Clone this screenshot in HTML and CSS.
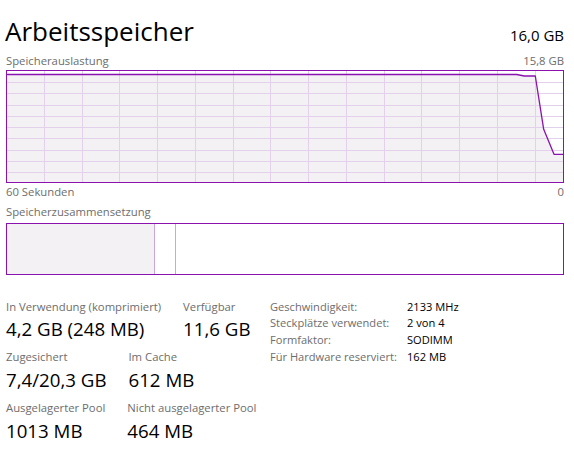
FILE: index.html
```html
<!DOCTYPE html>
<html lang="de">
<head>
<meta charset="utf-8">
<title>Arbeitsspeicher</title>
<link rel="stylesheet" href="styles.css">
</head>
<body>
<main class="tm">
  <header class="head">
    <h1 class="title">Arbeitsspeicher</h1>
    <span class="total">16,0 GB</span>
  </header>

  <div class="axis axis-top"><span>Speicherauslastung</span><span>15,8 GB</span></div>
  <div class="graph">
    <svg class="graph-svg" viewBox="0 0 556 111" width="556" height="111" aria-hidden="true">
      <rect x="0" y="0" width="556" height="111" fill="#ffffff"/>
      <polygon points="0,111 0,3.5 509.7,3.5 517.3,5 528.3,5 536.7,58.3 547,83.3 556,83.3 556,111" fill="#f3f1f4"/>
      <g stroke="#e3d0ea" stroke-width="1">
        <line x1="0" y1="11.5" x2="556" y2="11.5"/>
        <line x1="0" y1="22.5" x2="556" y2="22.5"/>
        <line x1="0" y1="34.5" x2="556" y2="34.5"/>
        <line x1="0" y1="45.5" x2="556" y2="45.5"/>
        <line x1="0" y1="56.5" x2="556" y2="56.5"/>
        <line x1="0" y1="67.5" x2="556" y2="67.5"/>
        <line x1="0" y1="79.5" x2="556" y2="79.5"/>
        <line x1="0" y1="90.5" x2="556" y2="90.5"/>
        <line x1="0" y1="101.5" x2="556" y2="101.5"/>
        <line x1="37.5" y1="0" x2="37.5" y2="111"/>
        <line x1="75.5" y1="0" x2="75.5" y2="111"/>
        <line x1="112.5" y1="0" x2="112.5" y2="111"/>
        <line x1="150.5" y1="0" x2="150.5" y2="111"/>
        <line x1="188.5" y1="0" x2="188.5" y2="111"/>
        <line x1="226.5" y1="0" x2="226.5" y2="111"/>
        <line x1="263.5" y1="0" x2="263.5" y2="111"/>
        <line x1="301.5" y1="0" x2="301.5" y2="111"/>
        <line x1="339.5" y1="0" x2="339.5" y2="111"/>
        <line x1="377.5" y1="0" x2="377.5" y2="111"/>
        <line x1="414.5" y1="0" x2="414.5" y2="111"/>
        <line x1="452.5" y1="0" x2="452.5" y2="111"/>
        <line x1="490.5" y1="0" x2="490.5" y2="111"/>
        <line x1="528.5" y1="0" x2="528.5" y2="111"/>
      </g>
      <polyline points="0,3.5 509.7,3.5 517.3,5 528.3,5 536.7,58.3 547,83.3 556,83.3" fill="none" stroke="#8b12ae" stroke-width="1.3" stroke-linejoin="round"/>
    </svg>
  </div>
  <div class="axis axis-bottom"><span>60 Sekunden</span><span>0</span></div>

  <div class="axis section-label"><span>Speicherzusammensetzung</span></div>
  <div class="comp">
    <div class="seg seg-used"></div>
    <div class="seg seg-mod"></div>
    <div class="seg seg-rest"></div>
  </div>

  <section class="stats">
    <div class="stat-grid">
      <div class="stat-row">
        <div class="stat"><div class="label">In Verwendung (komprimiert)</div><div class="value">4,2 GB (248 MB)</div></div>
        <div class="stat"><div class="label">Verfügbar</div><div class="value">11,6 GB</div></div>
      </div>
      <div class="stat-row">
        <div class="stat"><div class="label">Zugesichert</div><div class="value">7,4/20,3 GB</div></div>
        <div class="stat"><div class="label">Im Cache</div><div class="value">612 MB</div></div>
      </div>
      <div class="stat-row">
        <div class="stat"><div class="label">Ausgelagerter Pool</div><div class="value">1013 MB</div></div>
        <div class="stat"><div class="label">Nicht ausgelagerter Pool</div><div class="value">464 MB</div></div>
      </div>
    </div>
    <dl class="props">
      <dt>Geschwindigkeit:</dt><dd>2133 MHz</dd>
      <dt>Steckplätze verwendet:</dt><dd>2 von 4</dd>
      <dt>Formfaktor:</dt><dd>SODIMM</dd>
      <dt>Für Hardware reserviert:</dt><dd>162 MB</dd>
    </dl>
  </section>
</main>
</body>
</html>
```

FILE: styles.css
```css
html, body {
  margin: 0;
  padding: 0;
  background: #ffffff;
}

body {
  font-family: "Open Sans", "Noto Sans", sans-serif;
  color: #000000;
}

.tm {
  display: flex;
  flex-direction: column;
  width: 558px;
  padding: 12px 10px 0 6px;
}

.head {
  display: flex;
  justify-content: space-between;
  align-items: baseline;
}

.title {
  margin: 0 0 0 -1px;
  font-size: 26px;
  font-weight: 400;
  line-height: 38px;
}

.total {
  font-size: 15px;
  line-height: 20px;
}

.axis {
  display: flex;
  justify-content: space-between;
  font-size: 11.3px;
  line-height: 16px;
  color: #6d6d6d;
}

.axis-top {
  margin-top: 3px;
}

.graph {
  margin-top: 1px;
  width: 556px;
  height: 111px;
  border: 1px solid #8b12ae;
}

.graph-svg {
  display: block;
}

.axis-bottom {
  margin-top: 0.5px;
}

.section-label {
  margin-top: 4px;
}

.comp {
  margin-top: 3px;
  display: flex;
  height: 50px;
  border: 1px solid #8b12ae;
}

.seg-used {
  width: 147px;
  background: #f3f1f4;
  border-right: 1px solid #cba7d8;
}

.seg-mod {
  width: 20px;
  border-right: 1px solid #cba7d8;
}

.seg-rest {
  flex: 1;
}

.stats {
  display: flex;
  margin-top: 24px;
}

.stat-grid {
  display: flex;
  flex-direction: column;
  gap: 8.8px;
  width: 264px;
}

.stat-row {
  display: flex;
  gap: 22px;
}

.label {
  font-size: 11.3px;
  line-height: 16px;
  color: #6d6d6d;
  white-space: nowrap;
}

.value {
  margin-top: 2.2px;
  font-size: 18.7px;
  line-height: 24px;
  white-space: nowrap;
}

.props {
  display: grid;
  grid-template-columns: 137px auto;
  grid-auto-rows: 16.8px;
  margin: 0;
  font-size: 11.1px;
  line-height: 16.8px;
}

.props dt {
  color: #6d6d6d;
  white-space: nowrap;
}

.props dd {
  margin: 0;
  color: #000000;
  white-space: nowrap;
}
```
